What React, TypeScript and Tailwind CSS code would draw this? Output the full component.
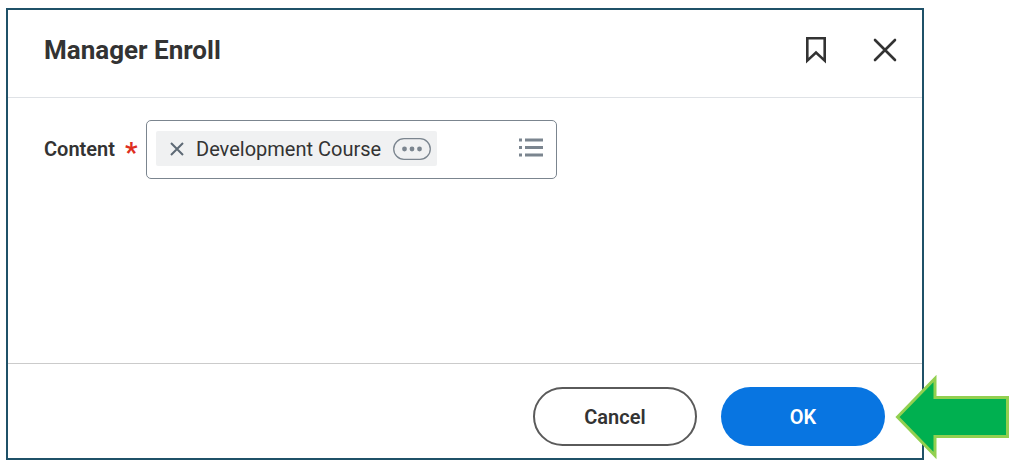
import { useState } from 'react';

export default function App() {
  const [selected, setSelected] = useState<string | null>('Development Course');
  const [query, setQuery] = useState('');

  return (
    <div className="min-h-screen bg-white pt-2 pb-1.5 pl-1.5 pr-[94px] font-[Roboto,sans-serif] text-xl leading-6 text-[#333333]">
      <section
        role="dialog"
        aria-labelledby="dialog-title"
        className="flex flex-col border-2 border-[#1f5168]"
      >
        {/* Title bar */}
        <header className="flex items-center justify-between border-b border-[#dfe2e6] pt-6 pb-[30px] pl-9 pr-6">
          <h1 id="dialog-title" className="text-[26px] leading-[33px] font-bold">
            Manager Enroll
          </h1>
          <div className="flex items-center gap-11">
            <button type="button" aria-label="Bookmark">
              <svg width="24" height="30" viewBox="0 0 24 30" fill="none" stroke="#333333" strokeWidth="2.6">
                <path d="M3.3 2.3H20.7V24.6L12 16.6L3.3 24.6Z" />
              </svg>
            </button>
            <button type="button" aria-label="Close">
              <svg width="26" height="28" viewBox="0 0 26 28" fill="none" stroke="#333333" strokeWidth="2.6" strokeLinecap="round">
                <path d="M3 3L23 23M23 3L3 23" />
              </svg>
            </button>
          </div>
        </header>

        {/* Content prompt */}
        <div className="flex min-h-[265px] items-start px-9 pt-[22px]">
          <label htmlFor="content" className="flex h-[59px] w-[102px] shrink-0 items-center gap-2.5 pb-0.5 font-semibold">
            Content
            <span className="pt-2 text-[28px] text-[#de2e21]">*</span>
          </label>
          <div className="flex h-[59px] w-full max-w-[411px] items-center rounded-[5px] border border-[#7b858f] pb-0.5 pl-[9px] pr-3">
            {selected && (
              <span className="flex h-[35px] shrink-0 items-center rounded-xs bg-[#f0f1f2] pl-3.5 pr-1.5">
                <button type="button" aria-label="Remove" onClick={() => setSelected(null)}>
                  <svg width="14" height="14" viewBox="0 0 14 14" fill="none" stroke="#5e6a75" strokeWidth="2">
                    <path d="M1 1L13 13M13 1L1 13" />
                  </svg>
                </button>
                <span className="px-3">{selected}</span>
                <button type="button" aria-label="Related actions">
                  <svg width="38" height="22" viewBox="0 0 38 22" fill="none">
                    <rect x="0.7" y="0.7" width="36.6" height="20.6" rx="10.3" stroke="#7b858f" strokeWidth="1.3" />
                    <g fill="#7b858f">
                      <circle cx="11.5" cy="11" r="2.4" />
                      <circle cx="19" cy="11" r="2.4" />
                      <circle cx="26.5" cy="11" r="2.4" />
                    </g>
                  </svg>
                </button>
              </span>
            )}
            <input
              id="content"
              type="text"
              value={query}
              onChange={(e) => setQuery(e.target.value)}
              className="min-w-0 flex-1 px-2 outline-none"
            />
            <button type="button" aria-label="Browse content">
              <svg width="26" height="22" viewBox="0 0 26 22" fill="#7b858f">
                <path d="M1 0.5h3v3H1zM7 0.5h18v3H7zM1 8h3v3H1zM7 8h18v3H7zM1 15.5h3v3H1zM7 15.5h18v3H7z" />
              </svg>
            </button>
          </div>
        </div>

        {/* Actions */}
        <footer className="flex justify-end gap-6 border-t border-[#cbcbcb] pt-[23px] pb-3 pr-[37px]">
          <button
            type="button"
            className="h-[59px] w-[164px] rounded-full border-2 border-[#5a5a5a] font-semibold"
          >
            Cancel
          </button>
          <div className="relative">
            <button
              type="button"
              className="h-[59px] w-[164px] rounded-full bg-[#0875e1] font-semibold text-white"
            >
              OK
            </button>
            <svg
              width="116"
              height="90"
              viewBox="0 0 116 90"
              aria-hidden="true"
              className="absolute top-1/2 left-full ml-2 -translate-y-1/2"
            >
              <path d="M4.5 45L42 6.5V25.5H114.5V64.5H42V83.5Z" fill="#00b050" stroke="#92d050" strokeWidth="3" />
            </svg>
          </div>
        </footer>
      </section>
    </div>
  );
}
